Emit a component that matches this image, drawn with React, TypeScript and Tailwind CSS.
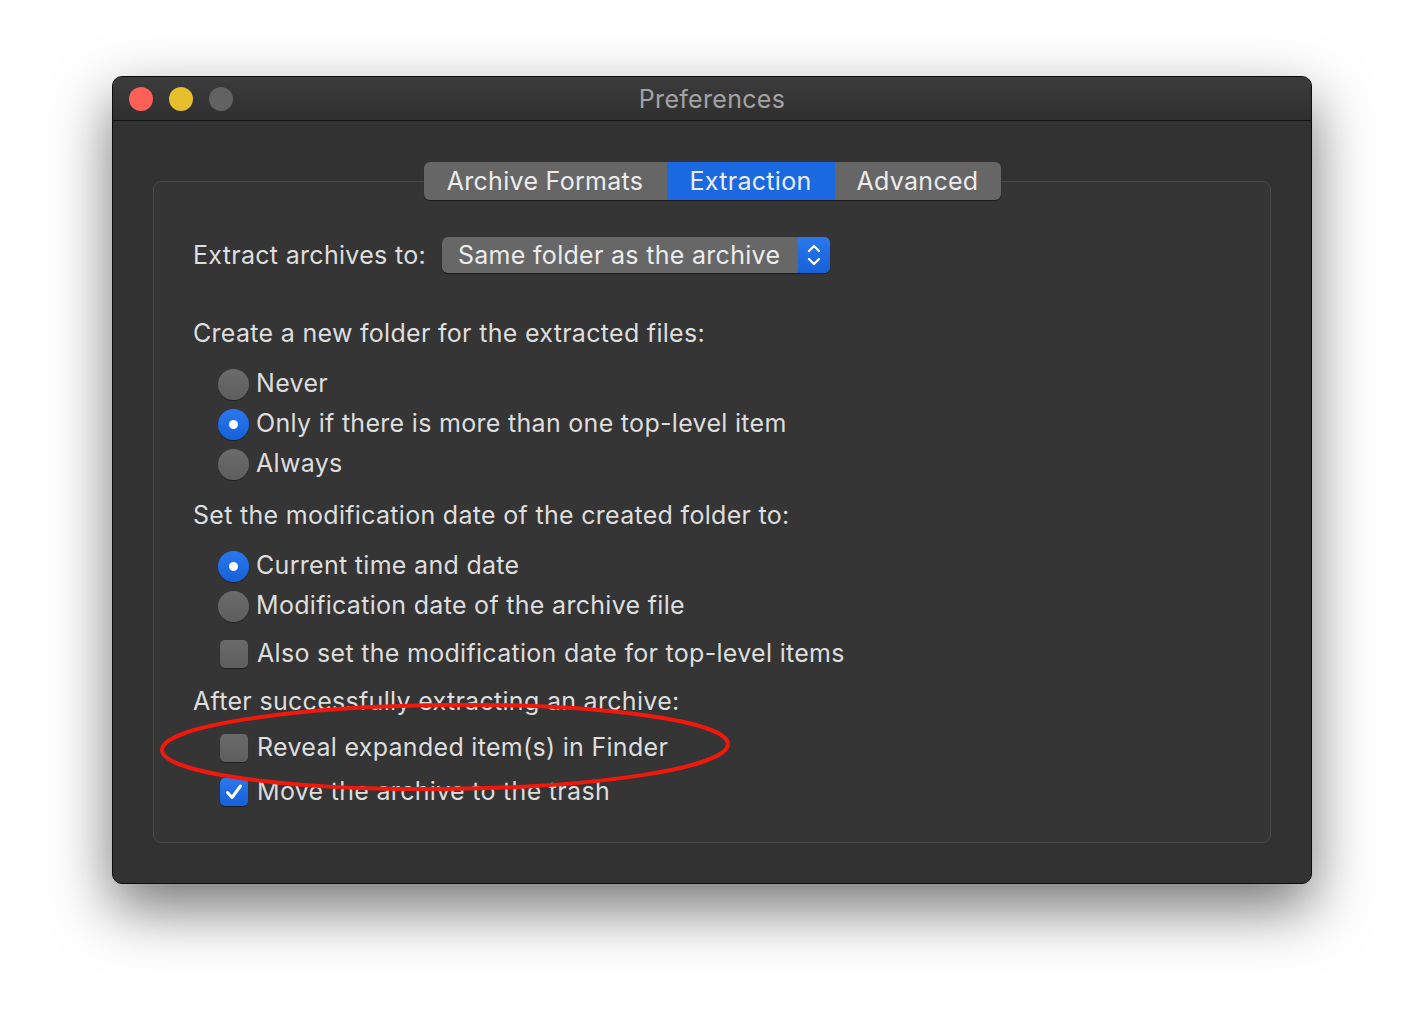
const font = { fontFamily: "Inter, 'Noto Sans', sans-serif" };

function Radio({ on }: { on?: boolean }) {
  return on ? (
    <div className="flex h-[31px] w-[31px] items-center justify-center rounded-full bg-gradient-to-b from-[#2a78ee] to-[#1660d8] shadow-[0_1px_1px_rgba(0,0,0,0.4)]">
      <div className="h-[9px] w-[9px] rounded-full bg-white" />
    </div>
  ) : (
    <div className="h-[31px] w-[31px] rounded-full bg-gradient-to-b from-[#6b6b6b] to-[#5e5e5e] shadow-[0_1px_1px_rgba(0,0,0,0.4)]" />
  );
}

function Check({ on }: { on?: boolean }) {
  return on ? (
    <div className="flex h-[28px] w-[28px] items-center justify-center rounded-[5px] bg-gradient-to-b from-[#2a78ee] to-[#1660d8] shadow-[0_1px_1px_rgba(0,0,0,0.4)]">
      <svg width="22" height="22" viewBox="0 0 22 22" fill="none">
        <path d="M4.5 11.5l4.5 5 8.5-11.5" stroke="white" strokeWidth="3" strokeLinecap="round" strokeLinejoin="round" />
      </svg>
    </div>
  ) : (
    <div className="h-[28px] w-[28px] rounded-[5px] bg-gradient-to-b from-[#6a6a6a] to-[#5e5e5e] shadow-[0_1px_1px_rgba(0,0,0,0.4)]" />
  );
}

function RadioRow({ on, label }: { on?: boolean; label: string }) {
  return (
    <div className="flex h-[40px] items-center pl-[25px]">
      <Radio on={on} />
      <span className="ml-[7px]">{label}</span>
    </div>
  );
}

function CheckRow({ on, label, className = "" }: { on?: boolean; label: string; className?: string }) {
  return (
    <div className={"flex h-[40px] items-center pl-[27px] " + className}>
      <Check on={on} />
      <span className="ml-[9px]">{label}</span>
    </div>
  );
}

export default function App() {
  return (
    <div className="min-h-screen bg-white pl-[112px] pt-[76px]" style={font}>
      <div className="relative flex h-[808px] w-[1200px] flex-col overflow-hidden rounded-[10px] border border-[#0c0c0c] bg-[#323232] shadow-[0_24px_60px_rgba(0,0,0,0.55)]">
        {/* title bar */}
        <div className="relative flex h-[44px] shrink-0 items-center border-b border-[#151515] bg-gradient-to-b from-[#3c3c3c] to-[#2f2f2f] px-[16px]">
          <div className="flex gap-[16px]">
            <div className="h-[24px] w-[24px] rounded-full bg-[#fe5f57]" />
            <div className="h-[24px] w-[24px] rounded-full bg-[#e6c02c]" />
            <div className="h-[24px] w-[24px] rounded-full bg-[#626262]" />
          </div>
          <div className="absolute inset-0 flex items-center justify-center pt-[2px] text-[25px] tracking-[0.3px] text-[#a3a3a3]">
            Preferences
          </div>
        </div>

        {/* body */}
        <div className="flex flex-1 flex-col px-[40px] pt-[41px]">
          <div className="relative z-10 mx-auto flex h-[38px] overflow-hidden rounded-[6px] text-[25px] tracking-[0.3px] text-[#ececec] shadow-[0_1px_1px_rgba(0,0,0,0.5)] -mb-[19px]">
            <div className="flex w-[243px] items-center justify-center bg-[#666666] pt-[1px]">Archive Formats</div>
            <div className="flex w-[168px] items-center justify-center bg-[#1a69e0] pt-[1px]">Extraction</div>
            <div className="flex w-[166px] items-center justify-center bg-[#666666] pt-[1px]">Advanced</div>
          </div>

          <div className="flex h-[662px] flex-col rounded-[8px] border border-[#494949] bg-[#353535] pl-[39px] pt-[55px] text-[25px] tracking-[0.3px] text-[#dedede]">
            <div className="flex h-[36px] items-center">
              <span className="pt-[2px]">Extract archives to:</span>
              <div className="ml-[16px] flex h-[36px] w-[388px] overflow-hidden rounded-[6px] bg-[#676767] shadow-[0_1px_1px_rgba(0,0,0,0.5)]">
                <div className="flex flex-1 items-center pl-[16px] pt-[2px] text-[#ececec]">Same folder as the archive</div>
                <div className="flex w-[32px] items-center justify-center bg-gradient-to-b from-[#2a78ee] to-[#1660d8]">
                  <svg width="16" height="30" viewBox="0 0 16 30" fill="none">
                    <path d="M3 11l5-5 5 5M3 19l5 5 5-5" stroke="white" strokeWidth="2.2" strokeLinecap="round" strokeLinejoin="round" />
                  </svg>
                </div>
              </div>
            </div>

            <div className="mt-[43px] flex h-[36px] items-center">Create a new folder for the extracted files:</div>
            <div className="mt-[12px]">
              <RadioRow label="Never" />
              <RadioRow on label="Only if there is more than one top-level item" />
              <RadioRow label="Always" />
            </div>

            <div className="mt-[14px] flex h-[36px] items-center">Set the modification date of the created folder to:</div>
            <div className="mt-[12px]">
              <RadioRow on label="Current time and date" />
              <RadioRow label="Modification date of the archive file" />
            </div>
            <CheckRow className="mt-[8px]" label="Also set the modification date for top-level items" />

            <div className="mt-[10px] flex h-[36px] items-center">After successfully extracting an archive:</div>
            <CheckRow className="mt-[8px]" label="Reveal expanded item(s) in Finder" />
            <CheckRow className="mt-[4px]" on label="Move the archive to the trash" />
          </div>
        </div>

        {/* annotation */}
        <svg className="pointer-events-none absolute left-0 top-0" width="1200" height="808" viewBox="0 0 1200 808">
          <ellipse cx="332" cy="670" rx="283" ry="42" fill="none" stroke="#f2190c" strokeWidth="4" transform="rotate(-0.6 332 670)" />
        </svg>
      </div>
    </div>
  );
}
